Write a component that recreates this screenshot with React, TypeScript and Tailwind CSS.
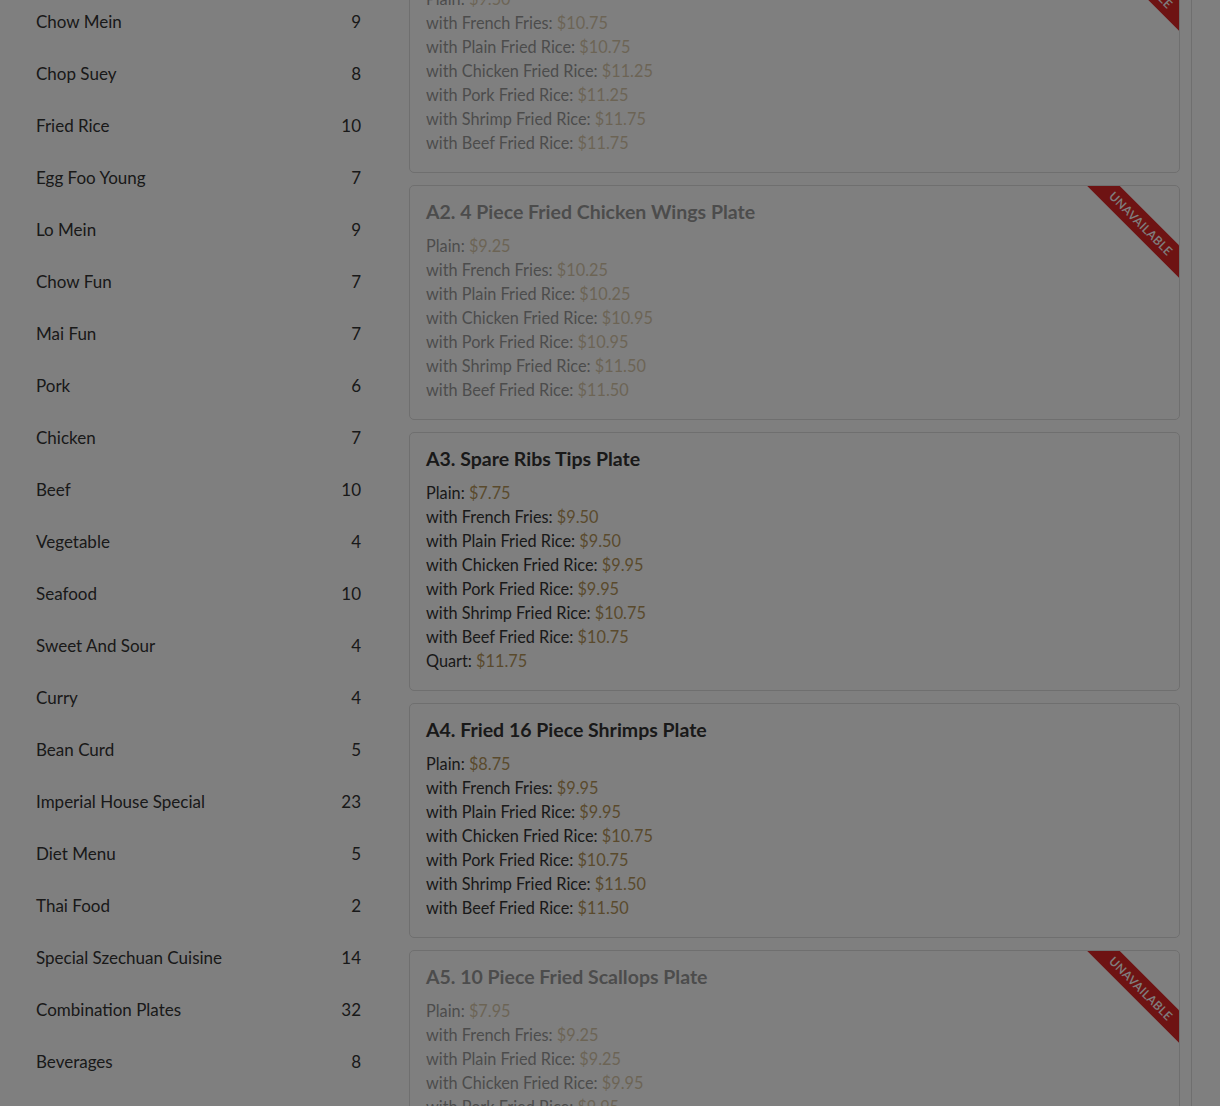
import React from "react";

type Line = [string, string];
type Item = { title: string; lines: Line[]; unavailable?: boolean };

const cats: [string, number][] = [
  ["Chow Mein", 9],
  ["Chop Suey", 8],
  ["Fried Rice", 10],
  ["Egg Foo Young", 7],
  ["Lo Mein", 9],
  ["Chow Fun", 7],
  ["Mai Fun", 7],
  ["Pork", 6],
  ["Chicken", 7],
  ["Beef", 10],
  ["Vegetable", 4],
  ["Seafood", 10],
  ["Sweet And Sour", 4],
  ["Curry", 4],
  ["Bean Curd", 5],
  ["Imperial House Special", 23],
  ["Diet Menu", 5],
  ["Thai Food", 2],
  ["Special Szechuan Cuisine", 14],
  ["Combination Plates", 32],
  ["Beverages", 8],
  ["Side Orders", 9],
];

const std = (p: string[]): Line[] => [
  ["Plain", p[0]],
  ["with French Fries", p[1]],
  ["with Plain Fried Rice", p[2]],
  ["with Chicken Fried Rice", p[3]],
  ["with Pork Fried Rice", p[4]],
  ["with Shrimp Fried Rice", p[5]],
  ["with Beef Fried Rice", p[6]],
];

const items: Item[] = [
  {
    title: "A1. 4 Piece Fried Chicken Plate",
    unavailable: true,
    lines: std(["$9.50", "$10.75", "$10.75", "$11.25", "$11.25", "$11.75", "$11.75"]),
  },
  {
    title: "A2. 4 Piece Fried Chicken Wings Plate",
    unavailable: true,
    lines: std(["$9.25", "$10.25", "$10.25", "$10.95", "$10.95", "$11.50", "$11.50"]),
  },
  {
    title: "A3. Spare Ribs Tips Plate",
    lines: [
      ...std(["$7.75", "$9.50", "$9.50", "$9.95", "$9.95", "$10.75", "$10.75"]),
      ["Quart", "$11.75"],
    ],
  },
  {
    title: "A4. Fried 16 Piece Shrimps Plate",
    lines: std(["$8.75", "$9.95", "$9.95", "$10.75", "$10.75", "$11.50", "$11.50"]),
  },
  {
    title: "A5. 10 Piece Fried Scallops Plate",
    unavailable: true,
    lines: std(["$7.95", "$9.25", "$9.25", "$9.95", "$9.95", "$10.75", "$10.75"]),
  },
];

function Ribbon() {
  return (
    <div className="pointer-events-none absolute right-0 top-0 h-[93px] w-[93px] overflow-hidden rounded-tr-[4px]">
      <div className="absolute left-[-15px] top-[26px] flex h-[23px] w-[140px] rotate-45 items-center justify-center bg-[#dc2626] text-[12px] font-semibold uppercase tracking-[0.3px] text-white">
        Unavailable
      </div>
    </div>
  );
}

function Card({ item }: { item: Item }) {
  return (
    <div className="relative mb-3 rounded-[5px] border border-[#dedede] bg-white px-4 pb-[17px] pt-4">
      <div className={item.unavailable ? "opacity-50" : ""}>
        <div className="mb-3 text-[19.5px] font-bold leading-[20px] text-[#333]">{item.title}</div>
        {item.lines.map(([l, p], i) => (
          <div key={i} className="text-[16.3px] leading-[24px] text-[#333]">
            {l}: <span className="text-[#b5955a]">{p}</span>
          </div>
        ))}
      </div>
      {item.unavailable && <Ribbon />}
    </div>
  );
}

export default function App() {
  return (
    <div
      className="relative h-[1106px] w-[1220px] overflow-hidden bg-white"
      style={{ fontFamily: "Lato, 'Noto Sans', sans-serif" }}
    >
      <div className="flex">
        <div className="w-[373px] shrink-0 pl-9 pr-3">
          <div className="-mt-[4px]">
            {cats.map(([n, c]) => (
              <div key={n} className="flex items-center justify-between py-3.5 text-[17px] leading-[24px] text-[#333]">
                <span>{n}</span>
                <span>{c}</span>
              </div>
            ))}
          </div>
        </div>
        <div className="ml-9 w-[783px] shrink-0 border-r border-[#dedede] pr-[11px]">
          <div className="-mt-[62px]">
            {items.map((it) => (
              <Card key={it.title} item={it} />
            ))}
          </div>
        </div>
      </div>
      <div className="absolute inset-0 bg-black/50" />
    </div>
  );
}
